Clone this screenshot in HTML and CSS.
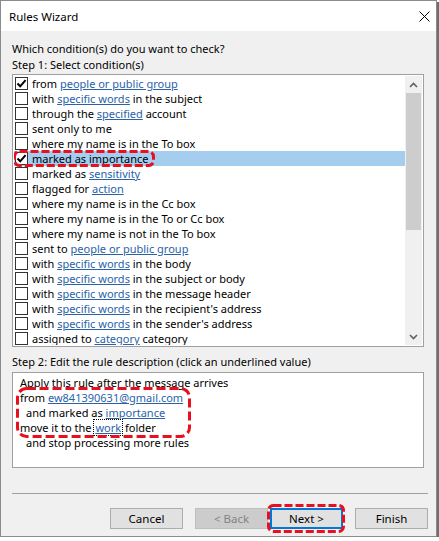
FILE: index.html
```html
<!DOCTYPE html>
<html>
<head>
<meta charset="utf-8">
<link rel="stylesheet" href="styles.css">
</head>
<body>
<div class="dialog">
  <div class="titlebar">
    <span class="title">Rules Wizard</span>
    <svg class="close" width="11" height="11" viewBox="0 0 11 11"><path d="M0.5 0.5 L10.5 10.5 M10.5 0.5 L0.5 10.5" stroke="#000" stroke-width="1" fill="none"/></svg>
  </div>
  <div class="content">
    <div class="label">Which condition(s) do you want to check?</div>
    <div class="label">Step 1: Select condition(s)</div>
    <div class="listbox">
      <div class="list">
        <div class="row"><span class="cb checked"><svg width="11" height="11" viewBox="0 0 11 11"><path d="M1.5 5.5 L4.2 8.3 L9.6 2.2" stroke="#000" stroke-width="2" fill="none"/></svg></span><span>from <a class="lnk">people or public group</a></span></div>
        <div class="row"><span class="cb"></span><span>with <a class="lnk">specific words</a> in the subject</span></div>
        <div class="row"><span class="cb"></span><span>through the <a class="lnk">specified</a> account</span></div>
        <div class="row"><span class="cb"></span><span>sent only to me</span></div>
        <div class="row"><span class="cb"></span><span>where my name is in the To box</span></div>
        <div class="row selected"><span class="cb checked"><svg width="11" height="11" viewBox="0 0 11 11"><path d="M1.5 5.5 L4.2 8.3 L9.6 2.2" stroke="#000" stroke-width="2" fill="none"/></svg></span><span>marked as importance</span>
          <svg class="mark mark-row" width="142" height="17" viewBox="0 0 142 17"><rect x="1.5" y="1.5" width="139" height="14" rx="5" fill="none" stroke="#e8101e" stroke-width="3" stroke-dasharray="8 3"/></svg>
        </div>
        <div class="row"><span class="cb"></span><span>marked as <a class="lnk">sensitivity</a></span></div>
        <div class="row"><span class="cb"></span><span>flagged for <a class="lnk">action</a></span></div>
        <div class="row"><span class="cb"></span><span>where my name is in the Cc box</span></div>
        <div class="row"><span class="cb"></span><span>where my name is in the To or Cc box</span></div>
        <div class="row"><span class="cb"></span><span>where my name is not in the To box</span></div>
        <div class="row"><span class="cb"></span><span>sent to <a class="lnk">people or public group</a></span></div>
        <div class="row"><span class="cb"></span><span>with <a class="lnk">specific words</a> in the body</span></div>
        <div class="row"><span class="cb"></span><span>with <a class="lnk">specific words</a> in the subject or body</span></div>
        <div class="row"><span class="cb"></span><span>with <a class="lnk">specific words</a> in the message header</span></div>
        <div class="row"><span class="cb"></span><span>with <a class="lnk">specific words</a> in the recipient's address</span></div>
        <div class="row"><span class="cb"></span><span>with <a class="lnk">specific words</a> in the sender's address</span></div>
        <div class="row"><span class="cb"></span><span>assigned to <a class="lnk">category</a> category</span></div>
      </div>
      <div class="scrollbar">
        <div class="arrow"><svg width="9" height="6" viewBox="0 0 9 6"><path d="M1 5 L4.5 1.5 L8 5" stroke="#606060" stroke-width="1.6" fill="none"/></svg></div>
        <div class="track"><div class="thumb"></div></div>
        <div class="arrow"><svg width="9" height="6" viewBox="0 0 9 6"><path d="M1 1 L4.5 4.5 L8 1" stroke="#606060" stroke-width="1.6" fill="none"/></svg></div>
      </div>
    </div>
    <div class="label step2">Step 2: Edit the rule description (click an underlined value)</div>
    <div class="desc">
      <div class="dline">Apply this rule after the message arrives</div>
      <div class="dline">from <a class="lnk">ew841390631@gmail.com</a></div>
      <div class="dline indent">and marked as <a class="lnk">importance</a></div>
      <div class="dline">move it to the <a class="lnk focus">work</a> folder</div>
      <div class="dline indent">and stop processing more rules</div>
      <svg class="mark mark-desc" width="175" height="51" viewBox="0 0 175 51"><rect x="1.5" y="1.5" width="172" height="48" rx="9" fill="none" stroke="#e8101e" stroke-width="3" stroke-dasharray="9 4"/></svg>
    </div>
    <div class="sep"></div>
    <div class="buttons">
      <button class="btn">Cancel</button>
      <button class="btn disabled">&lt; Back</button>
      <span class="next-wrap">
        <button class="btn default">Next &gt;</button>
        <svg class="mark mark-next" width="78" height="29" viewBox="0 0 78 29"><rect x="1.5" y="1.5" width="75" height="26" rx="5" fill="none" stroke="#e8101e" stroke-width="3" stroke-dasharray="8 3"/></svg>
      </span>
      <button class="btn">Finish</button>
    </div>
  </div>
</div>
</body>
</html>
```
FILE: styles.css
```css
* { box-sizing: border-box; }
html, body { margin: 0; padding: 0; background: #ffffff; }
body { font-family: "Noto Sans", "Open Sans", sans-serif; font-size: 11px; color: #000; }

.dialog {
  width: 437px;
  height: 537px;
  border: 1px solid #8c8c8c;
  background: #f0f0f0;
  box-shadow: 2px 2px 0 #6e6e6e;
  display: flex;
  flex-direction: column;
}

.titlebar {
  height: 30px;
  background: #fff;
  display: flex;
  align-items: center;
  justify-content: space-between;
  padding: 0 6px 0 8px;
  flex: none;
}
.title { font-size: 11.5px; }
.close { display: block; }

.content {
  flex: 1;
  padding: 10px 12px 0 11px;
  display: flex;
  flex-direction: column;
}

.label { height: 16px; line-height: 16px; white-space: nowrap; }
.step2 { margin-top: 7px; margin-bottom: 2px; }

.listbox {
  margin-top: 1px;
  height: 273px;
  border: 1px solid #a0a0a0;
  background: #fff;
  padding: 1px;
  display: flex;
  flex: none;
}
.list { flex: 1; overflow: hidden; }
.row {
  height: 15px;
  display: flex;
  align-items: center;
  padding-left: 1px;
  white-space: nowrap;
  position: relative;
}
.row.selected { background: #a4cdef; }
.cb {
  width: 13px;
  height: 13px;
  border: 1px solid #333;
  background: #fff;
  margin-right: 4px;
  flex: none;
  display: flex;
  align-items: center;
  justify-content: center;
}
.cb svg { display: block; }

.lnk { color: #2a62a8; text-decoration: underline; text-underline-offset: 1px; }

.mark { position: absolute; display: block; }
.mark-row { left: -1px; top: -1px; }

.scrollbar {
  width: 17px;
  flex: none;
  background: #f0f0f0;
  display: flex;
  flex-direction: column;
}
.arrow { height: 17px; display: flex; align-items: center; justify-content: center; flex: none; }
.arrow svg { display: block; }
.track { flex: 1; }
.thumb { height: 137px; margin: 0 1px; background: #cdcdcd; }

.desc {
  height: 96px;
  border: 1px solid #a0a0a0;
  background: #fff;
  padding: 2px 0 0 7px;
  position: relative;
  flex: none;
}
.dline { height: 15px; line-height: 15px; white-space: nowrap; }
.dline.indent { padding-left: 6px; }
.focus { outline: 1px dotted #000; outline-offset: 0; padding: 0 1px; }
.mark-desc { left: 3px; top: 14px; }

.sep { margin-top: 25px; margin-right: -4px; height: 1px; background: #a0a0a0; flex: none; }

.buttons {
  margin-top: 14px;
  margin-right: -4px;
  display: flex;
  justify-content: flex-end;
  align-items: center;
}
.btn {
  width: 73px;
  height: 21px;
  border: 1px solid #adadad;
  background: #e1e1e1;
  font-family: "Noto Sans", "Open Sans", sans-serif;
  font-size: 11.5px;
  color: #000;
  padding: 0;
  margin: 0 0 0 12px;
  line-height: 19px;
}
.btn.disabled { background: #cccccc; border-color: #bfbfbf; color: #838383; margin-left: 12px; }
.next-wrap { position: relative; margin-left: 2px; display: block; }
.next-wrap .btn { margin-left: 0; display: block; }
.btn.default { border: 2px solid #0078d7; line-height: 17px; }
.mark-next { left: -3px; top: -4px; }
```
